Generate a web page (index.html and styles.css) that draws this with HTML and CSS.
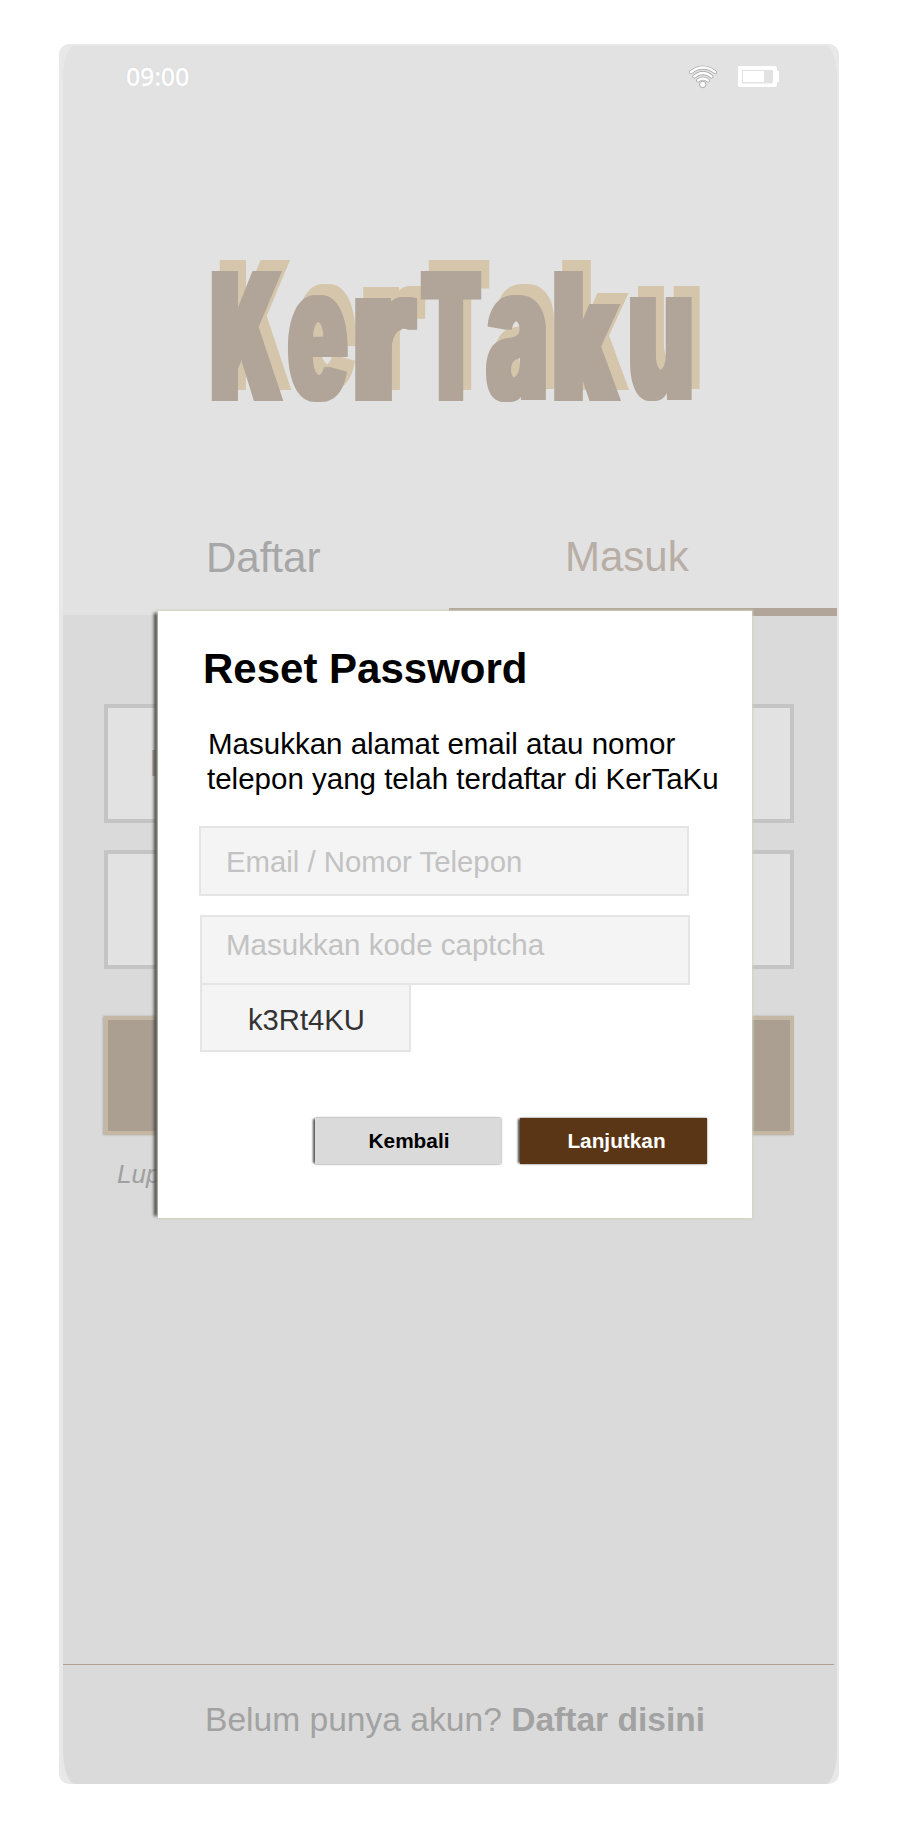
FILE: index.html
```html
<!DOCTYPE html>
<html lang="id">
<head>
<meta charset="utf-8">
<title>KerTaku</title>
<link rel="stylesheet" href="styles.css">
</head>
<body>
<main class="phone">
  <div class="screen">
  <header class="header">
    <div class="status">
      <span class="clock">09:00</span>
      <div class="status-icons">
        <svg class="wifi" width="30" height="24" viewBox="0 0 30 24">
          <g fill="none" stroke-linecap="round">
            <g stroke="#a0a0a0" stroke-width="3.8"><path d="M2.8 7.2Q15 -2 27.2 7.2"/><path d="M6.2 11.6Q15 4.4 23.6 11.6"/><path d="M10 15.5Q15 11.3 20 15.5"/></g>
            <g stroke="#fff" stroke-width="2.4"><path d="M2.8 7.2Q15 -2 27.2 7.2"/><path d="M6.2 11.6Q15 4.4 23.6 11.6"/><path d="M10 15.5Q15 11.3 20 15.5"/></g>
          </g>
          <circle cx="14.7" cy="19.5" r="3.2" fill="#fff" stroke="#999" stroke-width=".8"/>
        </svg>
        <svg class="battery" width="41" height="21" viewBox="0 0 41 21">
          <path fill="#fff" fill-rule="evenodd" d="M0 0H38L39 2V5H41V16H39V19L38 21H0ZM4 4V17.5H34L35 15.5V4Z"/>
          <path fill="#fff" d="M5 5H26V16H5Z"/>
        </svg>
      </div>
    </div>
    <svg class="logo" width="500" height="160" viewBox="202 251 500 160">
      <defs>
        <filter id="heavy" filterUnits="userSpaceOnUse" x="190" y="240" width="530" height="190"><feMorphology operator="dilate" radius="4 0"/></filter>
        <filter id="medium" filterUnits="userSpaceOnUse" x="190" y="240" width="530" height="190"><feMorphology operator="dilate" radius="3 0"/></filter>
        <g id="word" class="logo-word">
          <g filter="url(#heavy)">
            <text transform="translate(211.5 401) scale(.92 1.788)">K</text>
            <text transform="translate(352 401) scale(1.46 1.89)">r</text>
            <text transform="translate(422.5 401) scale(.83 1.788)">T</text>
            <text transform="translate(553 401) scale(1.05 1.785)">k</text>
          </g>
          <g filter="url(#medium)">
            <text transform="translate(288 400) scale(.98 1.89)">e</text>
            <text transform="translate(486.5 400) scale(1.03 1.89)">a</text>
            <text transform="translate(628 400) scale(1.01 1.89)">u</text>
          </g>
        </g>
      </defs>
      <use href="#word" x="8" y="-11" fill="#d5c6ab"/>
      <use href="#word" fill="#b0a598"/>
    </svg>
    <nav class="tabs">
      <a class="tab">Daftar</a>
      <a class="tab tab-active">Masuk</a>
    </nav>
  </header>
  <section class="login">
    <div class="field">I</div>
    <div class="field"></div>
    <div class="submit"></div>
    <p class="forgot">Lupa</p>
  </section>
  <footer class="footer"><p>Belum punya akun? <b>Daftar disini</b></p></footer>
  </div>
</main>
<section class="modal">
  <h1>Reset Password</h1>
  <p class="lead">Masukkan alamat email atau nomor<br><span class="second">telepon yang telah terdaftar di KerTaKu</span></p>
  <div class="input">Email / Nomor Telepon</div>
  <div class="input input-code">Masukkan kode captcha</div>
  <div class="captcha">k3Rt4KU</div>
  <div class="actions">
    <button class="btn btn-back">Kembali</button>
    <button class="btn btn-next">Lanjutkan</button>
  </div>
</section>
</body>
</html>
```

FILE: styles.css
```css
* { box-sizing: border-box; }
body { display: flow-root; margin: 0; background: #fff; font-family: "Liberation Sans", Arial, sans-serif; position: relative; height: 1825px; overflow: hidden; }
h1, p { margin: 0; }
.phone { margin: 44px 0 0 59px; width: 780px; height: 1740px; padding: 2px 2px 0 4px; background: #e8e8e8; border-radius: 10px; overflow: hidden; }
.screen { height: 1738px; display: flex; flex-direction: column; background: #dadada; border-radius: 12px / 34px; overflow: hidden; }
.header { height: 569px; background: #e2e2e2; display: flex; flex-direction: column; flex: none; }
.status { height: 62px; padding: 0 58px 0 63px; display: flex; justify-content: space-between; align-items: center; }
.clock { font: 500 25px/30px "Noto Sans", sans-serif; color: #fff; -webkit-text-stroke: .4px #fff; text-shadow: 0 0 1px #aaa; letter-spacing: -.2px; padding-bottom: 2px; }
.status-icons { display: flex; gap: 20px; align-items: center; padding-bottom: 1px; }
.logo { margin: 143px 0 0 139px; flex: none; display: block; }
.logo-word { font-family: Inter, sans-serif; font-weight: 900; font-size: 100px; }
.tabs { margin-top: auto; margin-bottom: -1px; display: flex; height: 106px; position: relative; }
.tab { width: 386px; padding: 24px 0 0 143px; font-size: 42px; line-height: 48px; color: #a7a7a7; }
.tab-active { width: 388px; padding: 23px 0 0 116px; color: #b8aea6; border-bottom: 8px solid #b0a598; }
.login { padding: 89px 43px 0 41px; display: flex; flex-direction: column; flex: 1; }
.field { height: 119px; margin-bottom: 27px; border: 4px solid #c4c4c4; background: #e2e2e2; font-size: 37px; line-height: 111px; padding-left: 41px; color: #a0a0a0; }
.submit { height: 119px; margin-top: 20px; border: 4px solid #c4b8a4; background: #ab9f92; box-shadow: -1px 0 2px #aaa; }
.forgot { margin: 24px 0 0 13px; font-size: 26px; line-height: 30px; font-style: italic; color: #a0a0a0; }
.footer { height: 120px; margin: 0 3px 0 -1px; border-top: 1px solid #b0a090; flex: none; padding: 35px 0 0 143px; font-size: 33.6px; line-height: 40px; color: #a2a2a2; white-space: nowrap; }
.modal { position: absolute; z-index: 2; left: 158px; top: 611px; width: 594px; height: 607px; background: #fff; padding: 34px 45px 0 41px; box-shadow: 0 0 2px 1px #d3d3c0, -6px 0 3px -2px #444; display: flex; flex-direction: column; }
.modal h1 { padding-left: 4px; font-size: 42px; line-height: 48px; white-space: nowrap; color: #000; }
.lead { margin: 33px 0 0 9px; font-size: 29.5px; line-height: 35px; white-space: nowrap; color: #000; }
.second { margin-left: -1px; }
.input { margin-top: 30px; width: 490px; height: 70px; flex: none; border: 2px solid #e5e5e5; background: #f4f4f4; padding-left: 25px; font-size: 29.35px; line-height: 67px; color: #c2c2c2; white-space: nowrap; }
.input-code { margin: 19px 0 0 1px; padding-left: 24px; line-height: 56px; font-size: 29.5px; }
.captcha { margin: -2px 0 0 1px; width: 211px; height: 69px; flex: none; border: 2px solid #e5e5e5; background: #f4f4f4; font-size: 29.2px; line-height: 70px; padding-left: 46px; color: #333; }
.actions { display: flex; justify-content: flex-end; gap: 19px; margin-top: 66px; }
.btn { width: 187px; height: 46px; border: 0; border-radius: 0; padding: 0 0 0 2px; font: bold 20.8px/46px "Liberation Sans", Arial, sans-serif; }
.btn-back { width: 186px; background: #dadada; color: #000; box-shadow: 0 0 2px #777, -3px 0 2px -1px #555; }
.btn-next { background: #5a3516; color: #fff; padding-left: 6px; box-shadow: 0 0 2px #777, -3px 0 2px -1px #444; }
```
